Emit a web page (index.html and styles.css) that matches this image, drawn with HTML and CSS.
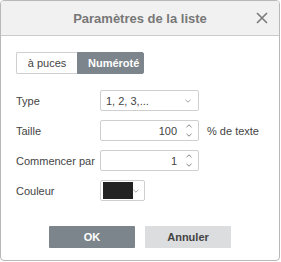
FILE: index.html
```html
<!DOCTYPE html>
<html lang="fr">
<head>
    <meta charset="UTF-8">
    <title>Paramètres de la liste</title>
    <link rel="stylesheet" href="styles.css">
</head>
<body>
    <div class="dialog">
        <div class="header">
            <span class="title">Paramètres de la liste</span>
            <span class="close">
                <svg width="12" height="12" viewBox="0 0 12 12"><path d="M1 1L11 11M11 1L1 11" stroke="#7a7a7a" stroke-width="1.6"/></svg>
            </span>
        </div>
        <div class="body">
            <div class="toggle">
                <button type="button" class="tab">à puces</button>
                <button type="button" class="tab active">Numéroté</button>
            </div>

            <div class="row">
                <label>Type</label>
                <div class="field select">
                    <span class="value">1, 2, 3,...</span>
                    <svg class="caret" width="6" height="4" viewBox="0 0 6 4"><path d="M0.5 0.8L3 3.2L5.5 0.8" fill="none" stroke="#999" stroke-width="0.9"/></svg>
                </div>
            </div>

            <div class="row">
                <label>Taille</label>
                <div class="field spin">
                    <span class="value">100</span>
                    <span class="arrows">
                        <svg width="6" height="4" viewBox="0 0 6 4"><path d="M0.5 3.2L3 0.8L5.5 3.2" fill="none" stroke="#777" stroke-width="0.9"/></svg>
                        <svg width="6" height="4" viewBox="0 0 6 4"><path d="M0.5 0.8L3 3.2L5.5 0.8" fill="none" stroke="#777" stroke-width="0.9"/></svg>
                    </span>
                </div>
                <span class="unit">% de texte</span>
            </div>

            <div class="row">
                <label>Commencer par</label>
                <div class="field spin">
                    <span class="value">1</span>
                    <span class="arrows">
                        <svg width="6" height="4" viewBox="0 0 6 4"><path d="M0.5 3.2L3 0.8L5.5 3.2" fill="none" stroke="#777" stroke-width="0.9"/></svg>
                        <svg width="6" height="4" viewBox="0 0 6 4"><path d="M0.5 0.8L3 3.2L5.5 0.8" fill="none" stroke="#777" stroke-width="0.9"/></svg>
                    </span>
                </div>
            </div>

            <div class="row">
                <label>Couleur</label>
                <div class="field color">
                    <span class="swatch"></span>
                    <svg class="caret" width="6" height="4" viewBox="0 0 6 4"><path d="M0.5 0.8L3 3.2L5.5 0.8" fill="none" stroke="#999" stroke-width="0.9"/></svg>
                </div>
            </div>
        </div>
        <div class="footer">
            <button type="button" class="btn primary">OK</button>
            <button type="button" class="btn">Annuler</button>
        </div>
    </div>
</body>
</html>
```

FILE: styles.css
```css
* {
    margin: 0;
    padding: 0;
    box-sizing: border-box;
}

body {
    font-family: Arial, "Liberation Sans", sans-serif;
    font-size: 11px;
    color: #444;
    background: #fff;
}

.dialog {
    width: 280px;
    height: 261px;
    border: 1px solid #b8b8b8;
    border-radius: 4px;
    background: #fff;
    overflow: hidden;
}

.header {
    height: 35px;
    background: #f1f1f1;
    border-bottom: 1px solid #cbcbcb;
    display: flex;
    align-items: center;
    justify-content: center;
    position: relative;
}

.title {
    font-size: 13px;
    font-weight: bold;
    color: #777;
}

.close {
    position: absolute;
    right: 11px;
    top: 11px;
    width: 12px;
    height: 12px;
    display: flex;
}

.body {
    padding: 16px 15px 0;
}

.toggle {
    display: flex;
    margin-bottom: 16px;
}

.tab {
    height: 22px;
    border: 1px solid #cfcfcf;
    background: #fff;
    color: #444;
    font-family: inherit;
    font-size: 11px;
    padding: 0 10px;
}

.tab:first-child {
    width: 61px;
    border-radius: 2px 0 0 2px;
    border-right: none;
}

.tab.active {
    width: 67px;
    background: #7d858c;
    border-color: #7d858c;
    color: #fff;
    font-weight: bold;
    border-radius: 0 2px 2px 0;
}

.row {
    display: flex;
    align-items: center;
    height: 21px;
    margin-bottom: 9px;
}

.row label {
    width: 84px;
}

.field {
    height: 21px;
    border: 1px solid #cfcfcf;
    border-radius: 2px;
    display: flex;
    align-items: center;
    background: #fff;
}

.select {
    width: 99px;
    padding: 0 7px 0 5px;
    justify-content: space-between;
}

.spin {
    width: 99px;
    padding-right: 6px;
    justify-content: flex-end;
}

.spin .value {
    margin-right: 9px;
}

.arrows {
    display: flex;
    flex-direction: column;
    gap: 5px;
}

.arrows svg {
    display: block;
}

.unit {
    margin-left: 8px;
}

.color {
    width: 45px;
    padding: 0 5px 0 2px;
    justify-content: space-between;
}

.swatch {
    width: 31px;
    height: 17px;
    background: #222;
}

.footer {
    display: flex;
    justify-content: center;
    gap: 10px;
    margin-top: 25px;
}

.btn {
    width: 86px;
    height: 22px;
    border: none;
    border-radius: 1px;
    background: #dcdddf;
    color: #444;
    font-family: inherit;
    font-size: 11px;
    font-weight: bold;
}

.btn.primary {
    background: #7d858c;
    color: #fff;
}
```
